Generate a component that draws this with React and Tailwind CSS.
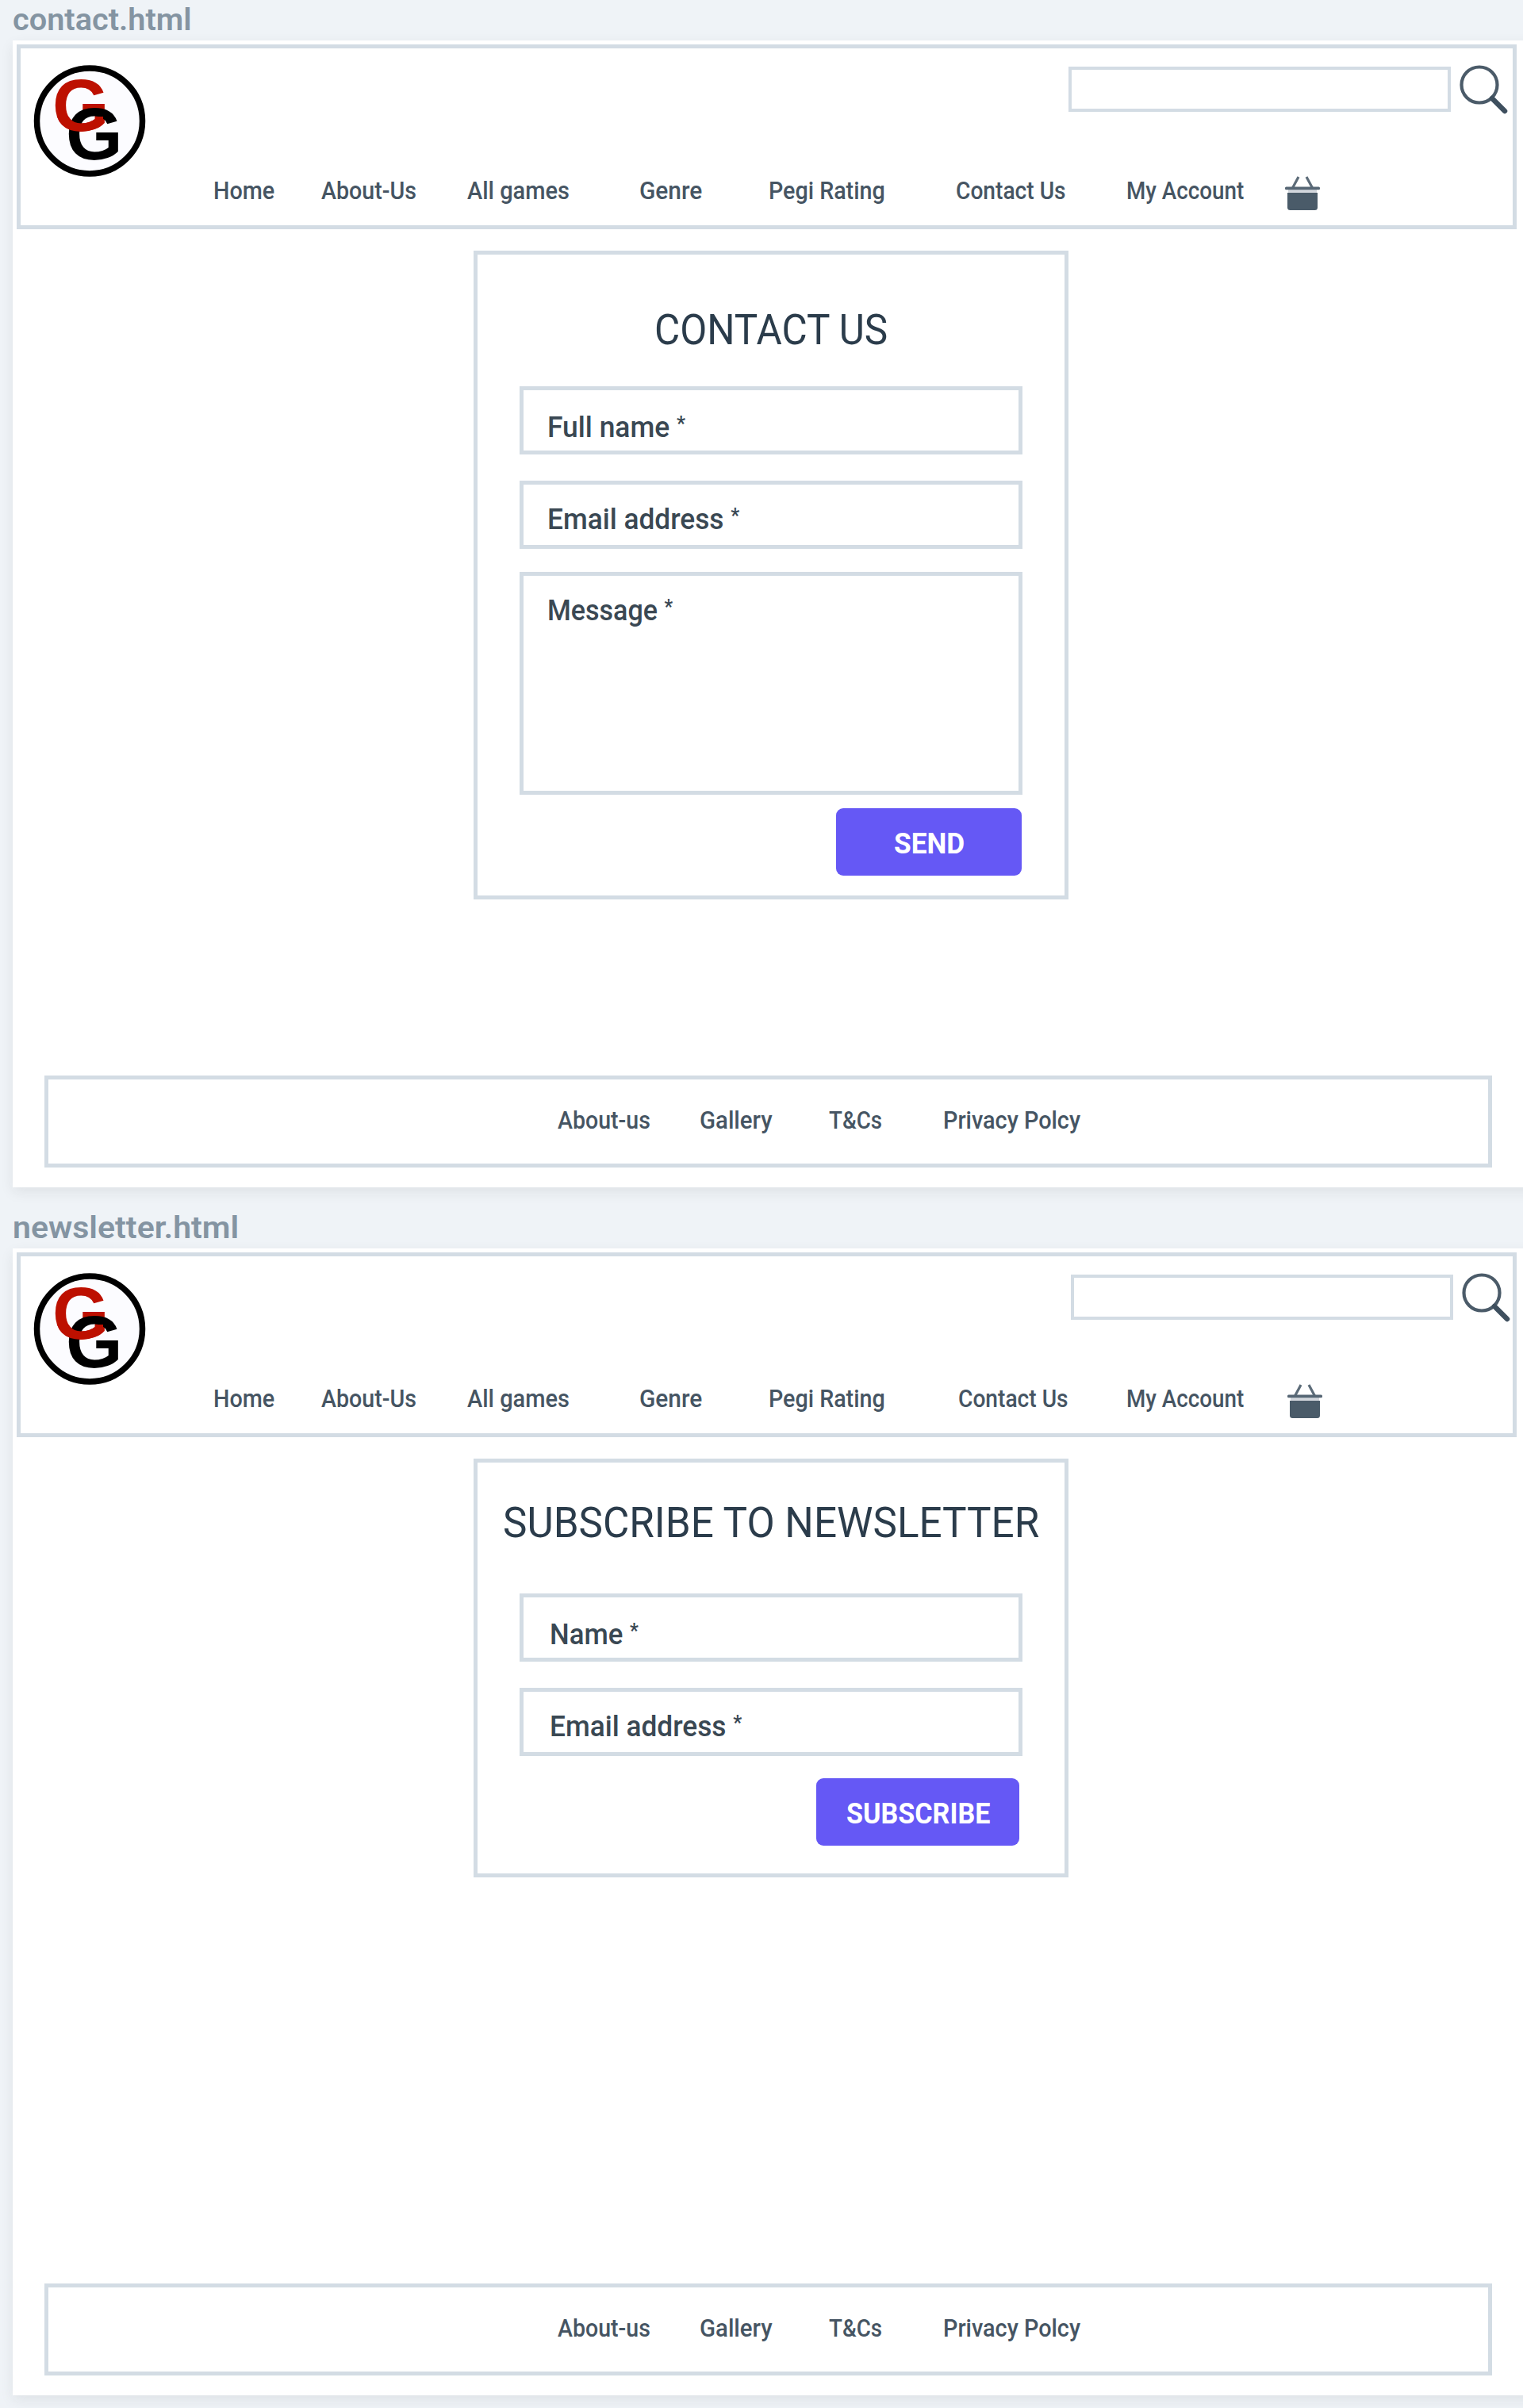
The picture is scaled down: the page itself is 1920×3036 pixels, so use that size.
import React, { useLayoutEffect, useRef, useState } from "react";

// Single line of text condensed or widened to fill the width of its box.
function Fit({ children, className }) {
  const box = useRef(null);
  const text = useRef(null);
  const [scale, setScale] = useState(1);
  useLayoutEffect(() => {
    setScale(box.current.clientWidth / text.current.offsetWidth);
  }, []);
  return (
    <div ref={box} className={`shrink-0 whitespace-nowrap ${className}`}>
      <span ref={text} className="inline-block origin-left" style={{ transform: `scaleX(${scale})` }}>
        {children}
      </span>
    </div>
  );
}

// Two interlocked letters: the red one passes behind the upper arc of the black
// one and in front of its left side.
function Logo({ id }) {
  const g = { fontFamily: "Liberation Sans, Arial, sans-serif", fontWeight: 700, fontSize: 92 };
  return (
    <svg className="ml-4 mt-[21px] h-[142px] w-[142px] shrink-0" viewBox="0 0 142 142">
      <clipPath id={`${id}-lower`}>
        <rect x="0" y="65" width="88" height="40" />
      </clipPath>
      <circle cx="71" cy="70.500" r="66.500" fill="#fcfcff" stroke="#000" strokeWidth="7.500" />
      <text id={`${id}-red`} x="24" y="83" fill="#bd1000" style={g}>G</text>
      <text x="41" y="119" fill="#000" style={g}>G</text>
      <g clipPath={`url(#${id}-lower)`}>
        <use href={`#${id}-red`} />
      </g>
    </svg>
  );
}

function SearchIcon() {
  return (
    <svg className="ml-[11px] mt-[21px] h-[62px] w-[62px] shrink-0" viewBox="0 0 62 62" fill="none" stroke="#4b5b69">
      <circle cx="25" cy="25" r="22.500" strokeWidth="4.200" />
      <path d="M41 42 57 58" stroke="#3e4f5e" strokeWidth="6.500" strokeLinecap="round" />
    </svg>
  );
}

function BasketIcon({ className }) {
  return (
    <svg className={`h-11 w-11 shrink-0 ${className}`} viewBox="0 0 44 44">
      <path d="M17 1 9.500 15M27 1l7.500 14" fill="none" stroke="#5d6c79" strokeWidth="3.200" />
      <rect x="4" y="17" width="36" height="5" fill="#d3d7dd" />
      <rect x="0" y="13.500" width="44" height="3.800" rx="1.500" fill="#566674" />
      <path d="M3 21h38v18.500q0 3.500-3.500 3.500h-31Q3 43 3 39.500z" fill="#4a5b69" />
    </svg>
  );
}

function Header({ id, searchMargin, contact, account, basket }) {
  const items = [
    ["Home", "ml-[243px] w-[77px]"],
    ["About-Us", "ml-[59px] w-[120px]"],
    ["All games", "ml-[64px] w-[129px]"],
    ["Genre", "ml-[88px] w-[79px]"],
    ["Pegi Rating", "ml-[84px] w-[147px]"],
    ["Contact Us", contact],
    ["My Account", account],
  ];
  return (
    <header className="ml-[5px] mt-[5px] flex h-[233px] w-[1891px] shrink-0 flex-col border-5 border-[#d3dce4]">
      <div className="flex h-[164px] items-start">
        <Logo id={id} />
        <div className={`mt-[23px] h-[57px] w-[482px] shrink-0 border-[4.5px] border-[#d3dce4] ${searchMargin}`} />
        <SearchIcon />
      </div>
      <nav className="flex text-[31px] leading-8 font-medium text-[#465563]">
        {items.map(([label, cls]) => (
          <Fit key={label} className={cls}>{label}</Fit>
        ))}
        <BasketIcon className={basket} />
      </nav>
    </header>
  );
}

function Footer() {
  return (
    <footer className="mb-[25px] ml-10 mt-auto flex h-[116px] w-[1825px] shrink-0 border-5 border-[#d3dce4] pt-9 text-[31px] leading-8 font-medium text-[#465563]">
      <Fit className="ml-[642px] w-[117px]">About-us</Fit>
      <Fit className="ml-[62px] w-[92px]">Gallery</Fit>
      <Fit className="ml-[71px] w-[67px]">T&amp;Cs</Fit>
      <Fit className="ml-[77px] w-[173px]">Privacy Polcy</Fit>
    </footer>
  );
}

function Field({ box, text, label }) {
  return (
    <div className={`w-[634px] shrink-0 border-5 border-[#d3dce4] ${box}`}>
      <Fit className={`text-4xl leading-10 font-medium text-[#3a4853] ${text}`}>
        {label} <span className="align-[8px] text-[25px] leading-none font-semibold">*</span>
      </Fit>
    </div>
  );
}

function Label({ className, children }) {
  return (
    <Fit className={`ml-4 text-[39px] leading-10 font-semibold text-[#8494a2] ${className}`}>{children}</Fit>
  );
}

const panel =
  "ml-4 flex h-[1446px] w-[1940px] shrink-0 flex-col bg-white shadow-[0_6px_16px_rgba(40,40,40,0.08)]";
const card = "ml-[581px] mt-[27px] flex w-[750px] shrink-0 flex-col border-5 border-[#d3dce4] pl-[53px]";
const button =
  "flex h-[85px] shrink-0 justify-center rounded-[9px] bg-[#6558f5] pt-[25px] text-[36px] leading-10 font-bold text-white";

export default function App() {
  return (
    <div className="flex h-[3036px] w-[1920px] flex-col overflow-hidden bg-[#eff3f7] font-[Roboto,sans-serif]">
      <Label className="mt-[5px] mb-[6px] w-[226px]">contact.html</Label>
      <main className={panel}>
        <Header
          id="gg-contact"
          searchMargin="ml-[1163px]"
          contact="ml-[89px] w-[139px]"
          account="ml-[76px] w-[148px]"
          basket="ml-[52px] -mt-[3px]"
        />
        <section className={`h-[818px] pt-[68px] ${card}`}>
          <Fit className="mb-11 ml-[170px] w-[294px] text-[53.5px] leading-[54px] text-[#2b3c4b]">CONTACT US</Fit>
          <Field box="mb-[33px] h-[86px] pt-[27px]" text="ml-[30px] w-[174px]" label="Full name" />
          <Field box="mb-[29px] h-[86px] pt-6" text="ml-[30px] w-[242px]" label="Email address" />
          <Field box="mb-[17px] h-[281px] pt-6" text="ml-[30px] w-[158px]" label="Message" />
          <button className={`ml-[399px] w-[234px] ${button}`}>
            <Fit className="w-[89px]">SEND</Fit>
          </button>
        </section>
        <Footer />
      </main>
      <Label className="mt-[31px] mb-[6px] w-[285px]">newsletter.html</Label>
      <main className={panel}>
        <Header
          id="gg-newsletter"
          searchMargin="ml-[1166px]"
          contact="ml-[92px] w-[139px]"
          account="ml-[73px] w-[148px]"
          basket="ml-[55px] -mt-[3px]"
        />
        <section className={`h-[528px] pt-[49px] ${card}`}>
          <Fit className="mb-[62px] -ml-[21px] w-[676px] text-[53.5px] leading-[54px] text-[#2b3c4b]">
            SUBSCRIBE TO NEWSLETTER
          </Fit>
          <Field box="mb-[33px] h-[86px] pt-[27px]" text="ml-[33px] w-[112px]" label="Name" />
          <Field box="mb-7 h-[86px] pt-6" text="ml-[33px] w-[242px]" label="Email address" />
          <button className={`ml-[374px] w-[256px] ${button}`}>
            <Fit className="w-[181px]">SUBSCRIBE</Fit>
          </button>
        </section>
        <Footer />
      </main>
    </div>
  );
}
